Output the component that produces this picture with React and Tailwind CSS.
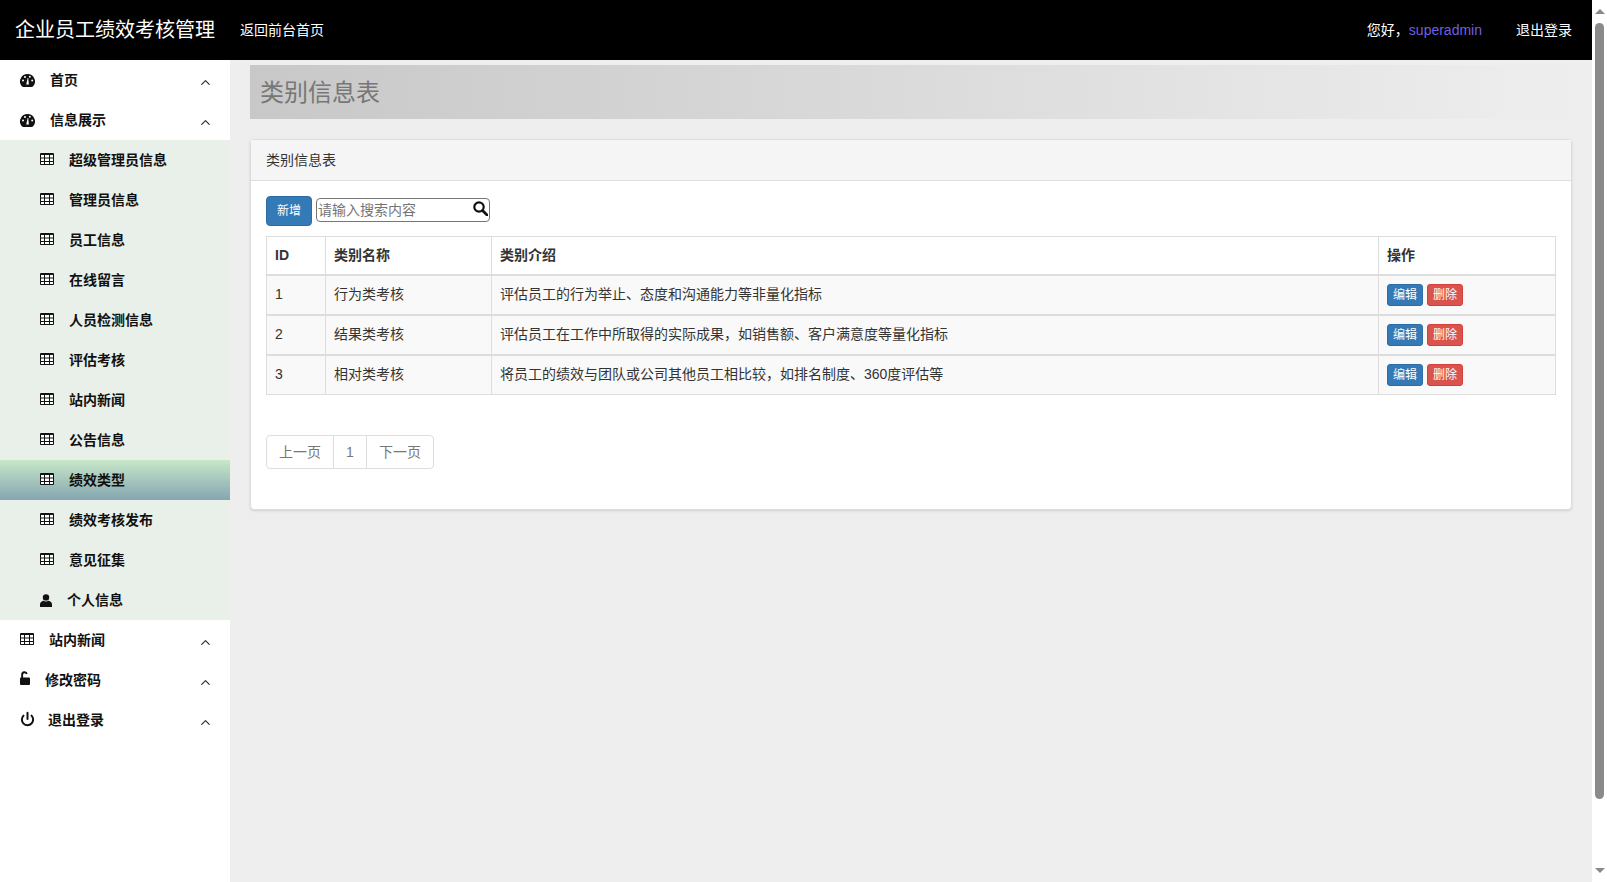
import React from 'react';
import { ChevronUp, Power } from 'lucide-react';

const TableIcon = ({ className = '' }) => (
  <svg width="14" height="12" viewBox="0 0 14 12" className={className}>
    <rect x="0" y="0" width="14" height="12" rx="1" fill="#111" />
    <path d="M1 2h3v2.500H1zM5 2h4v2.500H5zM10 2h3v2.500h-3zM1 5.500h3V8H1zM5 5.500h4V8H5zM10 5.500h3V8h-3zM1 9h3v2H1zM5 9h4v2H5zM10 9h3v2h-3z" fill="#fff" />
  </svg>
);

const DashIcon = () => (
  <svg width="15" height="13" viewBox="0 0 15 13">
    <path d="M7.500 0A7.500 7.500 0 0 0 1.600 12.100L3 13h9l1.400-.9A7.500 7.500 0 0 0 7.500 0z" fill="#111" />
    <circle cx="3" cy="6.400" r="1" fill="#fff" />
    <circle cx="5" cy="3" r="1" fill="#fff" />
    <circle cx="9.800" cy="2.800" r="1" fill="#fff" />
    <circle cx="12.200" cy="6.400" r="1" fill="#fff" />
    <path d="M6.200 10.500 7.700 4h.5l.7 6.500z" fill="#fff" />
  </svg>
);

const UserIcon = () => (
  <svg width="12" height="13" viewBox="0 0 12 13">
    <circle cx="6" cy="3.400" r="3.200" fill="#111" />
    <path d="M0 13v-2.600C0 8.400 1.600 7.200 3.400 6.800c1.500 1 3.700 1 5.200 0 1.800.4 3.400 1.600 3.400 3.600V13z" fill="#111" />
  </svg>
);

const UnlockIcon = () => (
  <svg width="10" height="14" viewBox="0 0 10 14" className="-mt-1">
    <path d="M1.200 7V3.600a3.300 3.300 0 0 1 6.500-.8L6 3.300a1.500 1.500 0 0 0-2.900.3V7z" fill="#111" />
    <rect x="0" y="6.500" width="10" height="7.500" rx="1" fill="#111" />
  </svg>
);

const SearchIcon = () => (
  <svg width="15" height="15" viewBox="0 0 15 15">
    <circle cx="6" cy="6" r="4.700" fill="none" stroke="#111" strokeWidth="2.200" />
    <path d="M9.500 9.500 14 14" stroke="#111" strokeWidth="2.800" strokeLinecap="round" />
  </svg>
);

const subItems = ['超级管理员信息', '管理员信息', '员工信息', '在线留言', '人员检测信息', '评估考核', '站内新闻', '公告信息', '绩效类型', '绩效考核发布', '意见征集'];

const rows = [
  ['1', '行为类考核', '评估员工的行为举止、态度和沟通能力等非量化指标'],
  ['2', '结果类考核', '评估员工在工作中所取得的实际成果，如销售额、客户满意度等量化指标'],
  ['3', '相对类考核', '将员工的绩效与团队或公司其他员工相比较，如排名制度、360度评估等'],
];

const TopItem = ({ icon, label, gap }) => (
  <div className="h-10 flex items-center pl-5 pr-[17px]">
    <span className="w-[15px] flex justify-start shrink-0">{icon}</span>
    <span className={`font-bold text-[#111] flex-1 ${gap}`}>{label}</span>
    <ChevronUp size={15} strokeWidth={2} className="text-[#333] mt-[5px]" />
  </div>
);

export default function App() {
  return (
    <div className="h-[882px] w-[1607px] flex overflow-hidden text-sm text-[#333] font-['Liberation_Sans','Noto_Sans_CJK_SC',sans-serif]">
      <div className="flex-1 flex flex-col min-w-0">
        <header className="h-[60px] bg-black text-white flex items-center pl-[15px] shrink-0">
          <span className="text-[20px] w-[225px]">企业员工绩效考核管理</span>
          <a className="flex-1">返回前台首页</a>
          <span>您好，<span className="text-[#6f5fe0]">superadmin</span></span>
          <a className="ml-[34px] mr-5">退出登录</a>
        </header>
        <div className="flex-1 flex min-h-0">
          <aside className="w-[230px] bg-white shrink-0">
            <TopItem icon={<DashIcon />} label="首页" gap="ml-[15px]" />
            <TopItem icon={<DashIcon />} label="信息展示" gap="ml-[15px]" />
            <div className="bg-[#e9f0ea]">
              {subItems.map((name) => (
                <div
                  key={name}
                  className={`h-10 flex items-center pl-10 ${name === '绩效类型' ? 'bg-gradient-to-b from-[#c8e8c8] to-[#85a6b0]' : ''}`}
                >
                  <TableIcon className="-mt-[3px]" />
                  <span className="ml-[15px] font-bold text-[#111]">{name}</span>
                </div>
              ))}
              <div className="h-10 flex items-center pl-10">
                <UserIcon />
                <span className="ml-[15px] font-bold text-[#111]">个人信息</span>
              </div>
            </div>
            <TopItem icon={<TableIcon className="-mt-[3px]" />} label="站内新闻" gap="ml-[14px]" />
            <TopItem icon={<UnlockIcon />} label="修改密码" gap="ml-[10px]" />
            <TopItem icon={<Power size={16} strokeWidth={3.200} className="text-[#111] -mt-[3px]" />} label="退出登录" gap="ml-[13px]" />
          </aside>
          <main className="flex-1 bg-[#eeeeee] pl-5 pr-5 pt-[5px] min-w-0">
            <div className="h-[54px] pt-[2px] bg-gradient-to-r from-[#c8c8c8] to-[#eeeeee] flex items-center pl-[10px] text-[24px] text-[#777]">类别信息表</div>
            <section className="mt-5 h-[371px] bg-white border border-[#ddd] rounded shadow-sm">
              <div className="h-[41px] bg-[#f5f5f5] border-b border-[#ddd] flex items-center px-[15px]">类别信息表</div>
              <div className="px-[15px] pt-[15px]">
                <div className="flex items-start gap-1 h-[30px]">
                  <button className="w-[46px] h-[30px] bg-[#337ab7] border border-[#2e6da4] rounded text-white text-xs">新增</button>
                  <div className="relative w-[174px] h-6 mt-[2px]">
                    <input
                      placeholder="请输入搜索内容"
                      className="w-full h-full border border-[#767676] rounded-sm pl-px text-sm placeholder:text-[#757575] outline-none"
                    />
                    <span className="absolute right-[2px] top-[3px]"><SearchIcon /></span>
                  </div>
                </div>
                <table className="mt-[10px] w-[1290px] table-fixed border-collapse border border-[#ddd]">
                  <thead>
                    <tr className="h-[38px] text-left">
                      <th className="w-[59px] px-2 border border-[#ddd] border-b-2">ID</th>
                      <th className="w-[166px] px-2 border border-[#ddd] border-b-2">类别名称</th>
                      <th className="w-[887px] px-2 border border-[#ddd] border-b-2">类别介绍</th>
                      <th className="px-2 border border-[#ddd] border-b-2">操作</th>
                    </tr>
                  </thead>
                  <tbody>
                    {rows.map((r) => (
                      <tr key={r[0]} className="h-10 bg-[#f9f9f9] border-b-2 border-[#ddd] last:border-b">
                        <td className="px-2 pb-[2px] border-x border-[#ddd]">{r[0]}</td>
                        <td className="px-2 pb-[2px] border-x border-[#ddd]">{r[1]}</td>
                        <td className="px-2 pb-[2px] border-x border-[#ddd]">{r[2]}</td>
                        <td className="px-2 border-x border-[#ddd]">
                          <div className="flex gap-1 items-center">
                            <button className="w-9 h-[22px] bg-[#337ab7] border border-[#2e6da4] rounded-[3px] text-white text-xs">编辑</button>
                            <button className="w-9 h-[22px] bg-[#d9534f] border border-[#d43f3a] rounded-[3px] text-white text-xs">删除</button>
                          </div>
                        </td>
                      </tr>
                    ))}
                  </tbody>
                </table>
                <div className="mt-10 flex h-[34px] w-fit border border-[#ddd] rounded text-[#777] divide-x divide-[#ddd]">
                  <span className="w-[67px] flex items-center justify-center">上一页</span>
                  <span className="w-[33px] flex items-center justify-center">1</span>
                  <span className="w-[66px] flex items-center justify-center">下一页</span>
                </div>
              </div>
            </section>
          </main>
        </div>
      </div>
      <div className="w-[15px] bg-white shrink-0 flex flex-col items-center">
        <span className="mt-[9px] h-0 w-0 border-x-[5px] border-x-transparent border-b-[5px] border-b-[#888]" />
        <div className="mt-[9px] w-[9px] h-[776px] rounded-full bg-[#8a8a8a]" />
        <div className="flex-1" />
        <span className="mb-[9px] h-0 w-0 border-x-[5px] border-x-transparent border-t-[5px] border-t-[#888]" />
      </div>
    </div>
  );
}
